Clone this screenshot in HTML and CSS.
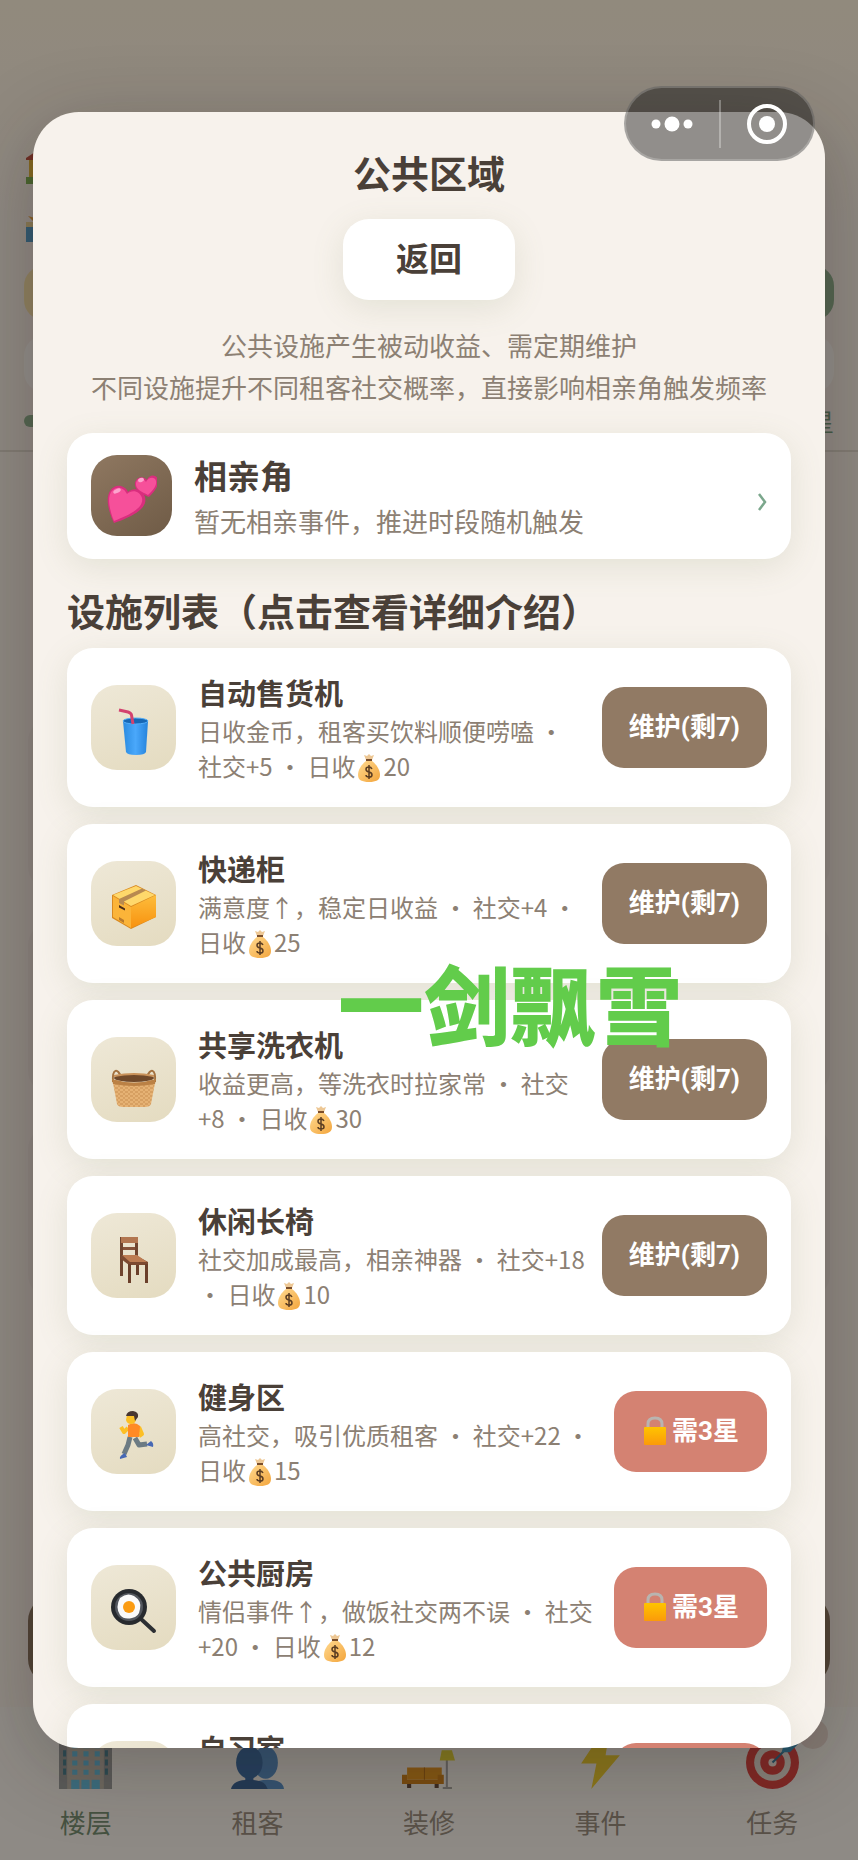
FILE: index.html
```html
<!DOCTYPE html>
<html lang="zh-CN">
<head>
<meta charset="utf-8">
<meta name="viewport" content="width=device-width, initial-scale=1">
<title>公共区域</title>
<link rel="stylesheet" href="styles.css">
</head>
<body>
<svg class="defs" aria-hidden="true">
  <defs>
    <linearGradient id="g-cup" x1="0" x2="1"><stop offset="0" stop-color="#2a8be0"/><stop offset=".5" stop-color="#4aa8fb"/><stop offset="1" stop-color="#2583dc"/></linearGradient>
    <linearGradient id="g-box" x1="0" y1="0" x2="0" y2="1"><stop offset="0" stop-color="#fdbd3c"/><stop offset="1" stop-color="#f8920f"/></linearGradient>
    <linearGradient id="g-lock" x1="0" y1="0" x2="0" y2="1"><stop offset="0" stop-color="#ffc400"/><stop offset="1" stop-color="#fb9a0a"/></linearGradient>
    <linearGradient id="g-bag" x1="0" y1="0" x2="1" y2="1"><stop offset="0" stop-color="#ffd98f"/><stop offset="1" stop-color="#f3a53c"/></linearGradient>
    <pattern id="weave" width="5" height="4" patternUnits="userSpaceOnUse"><rect width="5" height="4" fill="#e6b274"/><path d="M0 1h3M3 3h2" stroke="#c98f50" stroke-width="1"/></pattern>
  </defs>
  <symbol id="i-hearts" viewBox="0 0 50 50">
    <path d="M7 49C2 38-2 25 3 17c5-8 15-6 18 1 5-5 15-3 17 5 3 11-11 19-31 26z" fill="#d92e7e"/>
    <path d="M7 47C3 37 0 25 4 18c5-7 13-5 16 2 5-5 13-3 15 4 2 9-10 16-28 23z" fill="#f6509a"/>
    <path d="M42 23c-7-3-15-7-14-14 1-6 8-8 12-3 2-6 10-6 11 0 1 6-4 12-9 17z" fill="#d92e7e"/>
    <path d="M41 21c-6-3-13-6-12-12 1-5 7-6 10-1 2-5 9-6 10-1 1 5-3 9-8 14z" fill="#f6509a"/>
    <ellipse cx="10" cy="17" rx="4" ry="2" transform="rotate(-25 10 17)" fill="#fda5ce"/><ellipse cx="34" cy="6" rx="3" ry="2" transform="rotate(-20 34 6)" fill="#fda5ce"/>
  </symbol>
  <symbol id="i-cup" viewBox="0 0 48 48">
    <path d="M13 14h25l-2 31q-1 3-10 3t-10-3z" fill="url(#g-cup)"/>
    <ellipse cx="25.500" cy="14" rx="12.500" ry="3" fill="#1667b5" stroke="#52adf7"/>
    <path d="M9 3L18 5Q21 6 21.500 8L23 17" fill="none" stroke="#d3426f" stroke-width="3"/>
  </symbol>
  <symbol id="i-box" viewBox="0 0 48 48">
    <path d="M2 12L26 2l20 10v22L21 46 2 35z" fill="#d9891f"/>
    <path d="M3 13l18 11v21L3 34z" fill="#fbb439"/>
    <path d="M21 24l25-12v22L21 45z" fill="url(#g-box)"/>
    <path d="M3 12L26 3l19 9-24 11z" fill="#ffd86b"/>
    <path d="M9 16L32 5.500l4 2L14 18.500v4L9 20z" fill="#b98a50"/>
    <path d="M9 22l6 3.500v2L9 24.500z" fill="#4b2d17"/><path d="M9 34l5 3v3l-5-3z" fill="#b97a2c"/>
  </symbol>
  <symbol id="i-basket" viewBox="0 0 48 48">
    <path d="M3 23c-1-14 5-14 8-5M45 23c1-14-5-14-8-5" fill="none" stroke="#a3713f" stroke-width="2"/>
    <ellipse cx="24" cy="19" rx="20" ry="4" fill="#70492a"/>
    <path d="M3 24h42l-4 21q-1 3-6 3H13q-5 0-6-3z" fill="url(#weave)"/>
    <path d="M2 20q22 7 44 0l-1 5q-21 4-42 0z" fill="#bb8145"/>
    <path d="M4 17q20-4 40 0" fill="none" stroke="#c9925a" stroke-width="2"/>
  </symbol>
  <symbol id="i-chair" viewBox="0 0 48 48">
    <path d="M10 2h18v21h-3V6H13v35h-3z" fill="#70452f"/>
    <path d="M11 2h17v6H11z" fill="#b27650"/><path d="M13 12h12v3H13z" fill="#855239"/>
    <path d="M11 21h16l11 6v3H19l-8-6z" fill="#7c4930"/><path d="M12 20h15l10 7H20z" fill="#bd7c52"/>
    <path d="M18 29h3v19h-3zM35 29h3v19h-3zM26 30h3v10h-3z" fill="#6b3f2a"/>
  </symbol>
  <symbol id="i-run" viewBox="0 0 48 48">
    <path d="M18 17L14 21 11 16M29 16l3 7-3 2" fill="none" stroke="#fcbf25" stroke-width="4" stroke-linejoin="round"/>
    <path d="M20 26L18 34 14 43M25 27L29 34l8-1" fill="none" stroke="#6c7b83" stroke-width="5" stroke-linejoin="round"/>
    <path d="M18 14q7-4 12 1l-1 11H18z" fill="#ff8a25"/>
    <path d="M15 42l2 4-7 2q-1-3 5-6zM36 34l5-4q3 2 2 6z" fill="#4668b4"/>
    <path d="M17 4h9v5q-1 4-5 4t-5-4z" fill="#fcbf25"/>
    <path d="M16 5q1-5 7-5 6 1 5 6l-3 4-1-5z" fill="#483631"/>
  </symbol>
  <symbol id="i-pan" viewBox="0 0 48 48">
    <path d="M31 32l13 12" stroke="#2c2f33" stroke-width="4" stroke-linecap="round"/>
    <circle cx="19" cy="20" r="18" fill="#272a2e"/><circle cx="19" cy="20" r="14" fill="#53575e"/>
    <path d="M10 11q7-6 14-2 8 5 6 13-1 8-8 9-8 2-12-3-5-8 0-17z" fill="#fafafa"/>
    <circle cx="19" cy="20" r="6" fill="#fa9b12"/>
  </symbol>
  <symbol id="i-bag" viewBox="0 0 22 28">
    <path d="M8 6L6 1l3 1 2-2 2 2 3-1-2 5z" fill="#edc794"/>
    <path d="M8 7h6c5 4 8 9 8 14 0 5-4 7-11 7S0 26 0 21C0 16 3 11 8 7z" fill="url(#g-bag)"/>
    <path d="M8 6h6" stroke="#7b4e2a" stroke-width="2"/>
    <path d="M14 15q-1-2-3-2c-4 0-4 4 0 5s4 5 0 5q-3 0-3-2M11 11v14" fill="none" stroke="#5b3d22" stroke-width="1.500"/>
  </symbol>
  <symbol id="i-lock" viewBox="0 0 24 30">
    <path d="M5 13V8q0-6 7-6t7 6v5" fill="none" stroke="#b9b4b0" stroke-width="3"/>
    <rect x="1" y="11" width="22" height="18" rx="1" fill="url(#g-lock)"/>
  </symbol>
  <symbol id="n-floor" viewBox="0 0 52 52">
    <path d="M0 6h52v46H0z" fill="#8c9092"/><path d="M8 0h36v52H8z" fill="#b1aaa0"/>
    <path d="M13 7h5v5h-5zM24 7h5v5h-5zM35 7h5v5h-5zM13 15h5v5h-5zM24 15h5v5h-5zM35 15h5v5h-5zM13 24h5v5h-5zM24 24h5v5h-5zM35 24h5v5h-5zM13 33h5v5h-5zM24 33h5v5h-5zM35 33h5v5h-5zM12 43h8v9h-8zM22 43h8v9h-8zM32 43h8v9h-8z" fill="#4fb4dc"/>
    <path d="M4 14h3v6H4zM4 23h3v6H4zM4 32h3v6H4zM45 14h3v6h-3zM45 23h3v6h-3zM45 32h3v6h-3z" fill="#2f7086"/>
  </symbol>
  <symbol id="n-users" viewBox="0 0 52 52">
    <ellipse cx="34" cy="26" rx="12" ry="16" fill="#3f82c4"/><path d="M20 52q1-9 16-9t16 9z" fill="#3f82c4"/>
    <ellipse cx="18" cy="26" rx="13" ry="16" fill="#205b9e"/><path d="M14 38h8v6h-8z" fill="#205b9e"/><path d="M0 52q2-9 18-9t18 9z" fill="#1c4f8d"/>
  </symbol>
  <symbol id="n-sofa" viewBox="0 0 52 52">
    <path d="M44 22v28M40 51h9" stroke="#999" stroke-width="2"/><path d="M39 14h10l3 10H37z" fill="#e0d020"/>
    <path d="M5 31h34v12H5z" fill="#e08a08"/><path d="M22 31v12" stroke="#a85c00"/>
    <path d="M0 38h5v5h30v-5h6v9H0z" fill="#c87200"/><path d="M5 47h4v4H5zM32 47h4v4h-4z" fill="#4d3326"/>
  </symbol>
  <symbol id="n-bolt" viewBox="0 0 52 52"><path d="M25 0L7 27h15l-5 25 28-33H31l3-19z" fill="#edc918"/></symbol>
  <symbol id="n-target" viewBox="0 0 52 52">
    <circle cx="26" cy="26" r="26" fill="#d92c2c"/><circle cx="26" cy="26" r="18" fill="#e4ddd5"/><circle cx="26" cy="26" r="12" fill="#d92c2c"/><circle cx="26" cy="26" r="4" fill="#f3e8df"/>
    <path d="M26 26L43 9" stroke="#1b6b93" stroke-width="2"/><path d="M35 16l2-8 7-6 1 5 6 1-8 8z" fill="#1e86b8"/>
  </symbol>
</svg>

<div class="app" aria-hidden="true">
  <header class="top">
    <svg class="peek" viewBox="0 0 32 34"><path d="M3 9h26v25H3z" fill="#e0ac25"/><path d="M0 8L12 0h20v10H0z" fill="#b5392b"/><path d="M0 27h9v7H0z" fill="#6ba53f"/></svg>
    <svg class="peek" viewBox="0 0 32 34"><path d="M0 18h32v16H0z" fill="#3c91c4"/><path d="M0 14h32v5H0z" fill="#e8cf8a"/><path d="M8 14L2 8l7 2-1-7 8 7v4z" fill="#e59a2b"/></svg>
    <div class="pills"><span class="pill gold"></span><span class="pill green"></span></div>
    <div class="strip"></div>
    <div class="progress"><span class="bar"></span><span class="stars">星</span></div>
  </header>
  <main class="scene">
    <div class="ghost"></div><div class="ghost"></div><div class="ghost"></div>
    <div class="action"></div>
  </main>
  <nav class="nav">
    <a class="tab active" href="#floor"><svg><use href="#n-floor"/></svg>楼层</a>
    <a class="tab" href="#tenant"><svg><use href="#n-users"/></svg>租客</a>
    <a class="tab" href="#decor"><svg><use href="#n-sofa"/></svg>装修</a>
    <a class="tab" href="#event"><svg><use href="#n-bolt"/></svg>事件</a>
    <a class="tab" href="#task"><i class="badge"></i><svg><use href="#n-target"/></svg>任务</a>
  </nav>
</div>

<div class="overlay">
  <section class="modal" role="dialog" aria-labelledby="title">
    <h1 class="title" id="title">公共区域</h1>
    <button class="back" type="button">返回</button>
    <p class="intro">公共设施产生被动收益、需定期维护<br>不同设施提升不同租客社交概率，直接影响相亲角触发频率</p>

    <a class="card corner" href="#match">
      <span class="tile dark"><svg><use href="#i-hearts"/></svg></span>
      <span class="body"><strong class="corner-name">相亲角</strong><span class="corner-note">暂无相亲事件，推进时段随机触发</span></span>
      <svg class="chevron" viewBox="0 0 10 20"><path d="M2 2l6 8-6 8" fill="none" stroke="#7ba78c" stroke-width="2.500"/></svg>
    </a>

    <h2 class="section">设施列表（点击查看详细介绍）</h2>
    <ul class="list">
      <li class="card item"><span class="tile"><svg><use href="#i-cup"/></svg></span><div class="info"><h3 class="name">自动售货机</h3><p class="desc">日收金币，租客买饮料顺便唠嗑 · 社交+5 · 日收<svg class="bag"><use href="#i-bag"/></svg>20</p></div><button class="btn" type="button">维护(剩7)</button></li>
      <li class="card item"><span class="tile"><svg><use href="#i-box"/></svg></span><div class="info"><h3 class="name">快递柜</h3><p class="desc">满意度↑，稳定日收益 · 社交+4 · 日收<svg class="bag"><use href="#i-bag"/></svg>25</p></div><button class="btn" type="button">维护(剩7)</button></li>
      <li class="card item"><span class="tile"><svg><use href="#i-basket"/></svg></span><div class="info"><h3 class="name">共享洗衣机</h3><p class="desc">收益更高，等洗衣时拉家常 · 社交+8 · 日收<svg class="bag"><use href="#i-bag"/></svg>30</p></div><button class="btn" type="button">维护(剩7)</button></li>
      <li class="card item"><span class="tile"><svg><use href="#i-chair"/></svg></span><div class="info"><h3 class="name">休闲长椅</h3><p class="desc">社交加成最高，相亲神器 · 社交+18 · 日收<svg class="bag"><use href="#i-bag"/></svg>10</p></div><button class="btn" type="button">维护(剩7)</button></li>
      <li class="card item"><span class="tile"><svg><use href="#i-run"/></svg></span><div class="info"><h3 class="name">健身区</h3><p class="desc">高社交，吸引优质租客 · 社交+22 · 日收<svg class="bag"><use href="#i-bag"/></svg>15</p></div><button class="btn locked" type="button"><svg class="lock"><use href="#i-lock"/></svg>需3星</button></li>
      <li class="card item"><span class="tile"><svg><use href="#i-pan"/></svg></span><div class="info"><h3 class="name">公共厨房</h3><p class="desc">情侣事件↑，做饭社交两不误 · 社交+20 · 日收<svg class="bag"><use href="#i-bag"/></svg>12</p></div><button class="btn locked" type="button"><svg class="lock"><use href="#i-lock"/></svg>需3星</button></li>
      <li class="card item"><span class="tile"></span><div class="info"><h3 class="name">自习室</h3><p class="desc"></p></div><button class="btn locked" type="button" aria-label="未解锁"></button></li>
    </ul>
  </section>
</div>

<div class="capsule">
  <button class="cap-btn" type="button" aria-label="更多"><svg width="42" height="20" viewBox="0 0 42 20" fill="#fff"><circle cx="5" cy="10" r="4.500"/><circle cx="21" cy="10" r="7.500"/><circle cx="37" cy="10" r="4.500"/></svg></button>
  <button class="cap-btn" type="button" aria-label="关闭"><svg width="42" height="42" viewBox="0 0 42 42"><circle cx="21" cy="21" r="18" fill="none" stroke="#fff" stroke-width="4"/><circle cx="21" cy="21" r="8" fill="#fff"/></svg></button>
</div>
<div class="watermark">一剑飘雪</div>
</body>
</html>
```

FILE: styles.css
```css
* { box-sizing: border-box; }
body {
  margin: 0;
  font-family: "Noto Sans CJK SC", "Noto Sans", sans-serif;
  color: #4a4038;
  background: #8f877b;
}
h1, h2, h3, p, ul { margin: 0; padding: 0; }
a { color: inherit; text-decoration: none; }
button { font: inherit; border: 0; padding: 0; cursor: pointer; }
.defs { position: absolute; width: 0; height: 0; }

/* game screen below the dialog */
.app { display: flex; flex-direction: column; height: 100vh; background: linear-gradient(#fbf0dc, #f5ede6 12%); overflow: hidden; }
.top { padding: 150px 24px 0; height: 452px; border-bottom: 2px solid #d9d2c8; display: flex; flex-direction: column; }
.peek { width: 32px; height: 34px; margin: 0 0 24px 2px; flex: none; }
.pills { display: flex; justify-content: space-between; }
.pill { width: 160px; height: 54px; border-radius: 20px; }
.gold { background: #f5dfa0; }
.green { background: #7fa883; }
.strip { height: 56px; margin-top: 16px; border-radius: 20px; background: #fbf8f4; }
.progress { display: flex; justify-content: space-between; align-items: center; margin-top: 12px; }
.bar { width: 300px; height: 12px; border-radius: 6px; background: #7fa883; }
.stars { font-size: 24px; line-height: 34px; color: #5f8f6c; }
.scene { flex: 1; padding: 264px 28px 0; display: flex; flex-direction: column; gap: 28px; }
.ghost { height: 176px; border-radius: 26px; background: #eee5de; }
.action { height: 90px; margin-top: auto; margin-bottom: 22px; border-radius: 26px; background: #78644c; }
.nav { display: flex; height: 153px; background: #f4f1ec; }
.tab { position: relative; flex: 1; display: flex; flex-direction: column; align-items: center; padding-top: 29px; font-size: 26px; line-height: 36px; gap: 15px; color: #8c8073; }
.tab svg { position: relative; width: 53px; height: 53px; }
.active { color: #648266; }
.badge { position: absolute; right: 30px; top: 12px; width: 30px; height: 30px; border-radius: 50%; background: #e3d2cb; }

/* dialog */
.overlay { position: fixed; inset: 0; display: flex; align-items: center; justify-content: center; padding: 0 33px; background: rgba(40, 35, 30, .5); }
.modal {
  display: flex; flex-direction: column;
  width: 100%; height: 88vh; padding: 32px 34px;
  overflow-y: auto; scrollbar-width: none;
  border-radius: 46px; background: #f7f2ec;
  box-shadow: 0 16px 80px rgba(40, 30, 24, .28);
}
.modal > * { flex: none; }
.title { font-size: 38px; line-height: 56px; text-align: center; }
.back {
  align-self: center; margin-top: 19px; padding: 0 53px 4px;
  font-size: 33px; font-weight: 700; line-height: 77px; color: #4a4038;
  background: #fff; border-radius: 26px; box-shadow: 0 8px 32px rgba(120, 135, 90, .15);
}
.intro { margin: 24px -20px 25px; text-align: center; font-size: 26px; line-height: 42px; color: #8c8073; }
.card { display: flex; align-items: center; background: #fff; border-radius: 26px; box-shadow: 0 8px 32px rgba(120, 135, 90, .15); }
.corner { padding: 16px 24px 17px; gap: 22px; }
.body { flex: 1; display: flex; flex-direction: column; gap: 3px; padding-top: 4px; }
.corner-name { font-size: 33px; line-height: 44px; }
.corner-note { font-size: 26px; line-height: 42px; color: #8c8073; }
.chevron { width: 10px; height: 20px; margin-top: 14px; }
.section { margin: 25px 0 12px; font-size: 38px; line-height: 52px; }
.list { display: flex; flex-direction: column; gap: 17px; list-style: none; }
.item { padding: 24px; }
.tile { flex: none; display: flex; justify-content: center; align-items: center; width: 85px; height: 85px; padding-top: 8px; border-radius: 26px; background: linear-gradient(160deg, #eee8d7, #e4dbc0); }
.tile svg { width: 48px; height: 48px; }
.dark { width: 81px; height: 81px; background: linear-gradient(145deg, #8f7861, #6f5b46); }
.dark svg { width: 50px; height: 50px; }
.info { flex: 1; min-width: 0; margin: 0 14px 0 22px; }
.name { font-size: 29px; line-height: 41px; }
.desc { min-height: 70px; font-size: 24px; line-height: 35px; color: #8c8073; }
.bag { width: 22px; height: 28px; margin: 0 3px; vertical-align: -6px; }
.btn {
  flex: none; display: flex; align-items: center; min-width: 153px; min-height: 81px; padding: 0 27px;
  font-family: Roboto, "Noto Sans CJK SC", sans-serif; font-size: 26px; font-weight: 700; line-height: 81px;
  color: #fff; background: #917a64; border-radius: 22px;
}
.locked { background: #d48272; }
.lock { width: 24px; height: 30px; margin: 0 5px 0 2px; }

/* floating controls */
.capsule { position: fixed; top: 86px; right: 43px; display: flex; align-items: center; width: 191px; height: 75px; border: 2px solid rgba(255, 255, 255, .2); border-radius: 38px; background: rgba(0, 0, 0, .41); }
.cap-btn { flex: 1; height: 48px; display: flex; align-items: center; justify-content: center; background: none; }
.cap-btn + .cap-btn { border-left: 2px solid rgba(255, 255, 255, .3); }
.watermark { position: fixed; top: 942px; left: 338px; font-size: 86px; font-weight: 900; line-height: 120px; color: #62cc4b; white-space: nowrap; pointer-events: none; }
```
